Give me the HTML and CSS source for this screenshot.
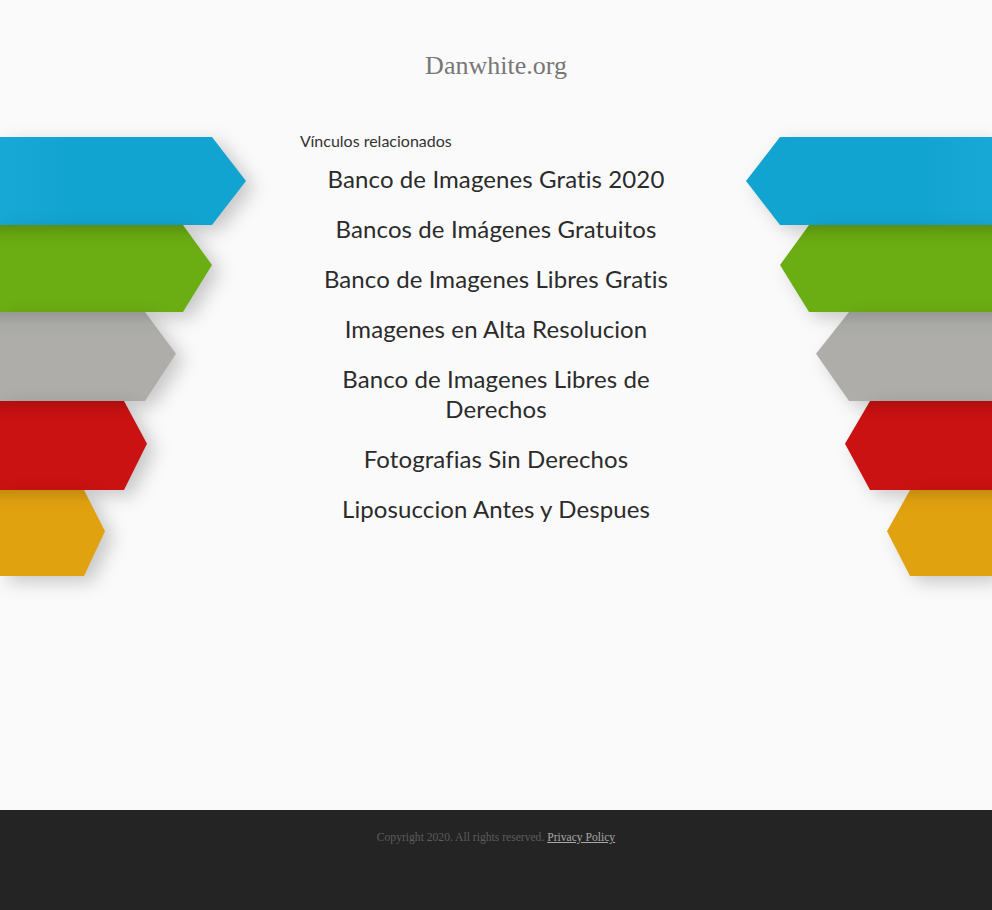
FILE: index.html
```html
<!DOCTYPE html>
<html lang="es">
<head>
<meta charset="utf-8">
<title>Danwhite.org</title>
<link rel="stylesheet" href="styles.css">
</head>
<body>
<div class="page">
  <header class="header">
    <h1 class="site-title">Danwhite.org</h1>
  </header>
  <main class="main">
    <div class="side side-left">
      <div class="arrow arrow-blue a1"></div>
      <div class="arrow arrow-green a2"></div>
      <div class="arrow arrow-gray a3"></div>
      <div class="arrow arrow-red a4"></div>
      <div class="arrow arrow-yellow a5"></div>
    </div>
    <section class="center">
      <h2 class="related-title">Vínculos relacionados</h2>
      <ul class="links">
        <li><a href="#">Banco de Imagenes Gratis 2020</a></li>
        <li><a href="#">Bancos de Imágenes Gratuitos</a></li>
        <li><a href="#">Banco de Imagenes Libres Gratis</a></li>
        <li><a href="#">Imagenes en Alta Resolucion</a></li>
        <li><a href="#">Banco de Imagenes Libres de Derechos</a></li>
        <li><a href="#">Fotografias Sin Derechos</a></li>
        <li><a href="#">Liposuccion Antes y Despues</a></li>
      </ul>
    </section>
    <div class="side side-right">
      <div class="arrow arrow-blue a1"></div>
      <div class="arrow arrow-green a2"></div>
      <div class="arrow arrow-gray a3"></div>
      <div class="arrow arrow-red a4"></div>
      <div class="arrow arrow-yellow a5"></div>
    </div>
  </main>
</div>
<footer class="footer">
  <p class="copyright">Copyright 2020. All rights reserved. <a href="#" class="privacy">Privacy Policy</a></p>
</footer>
</body>
</html>
```
FILE: styles.css
```css
html, body {
  margin: 0;
  padding: 0;
}
body {
  background: #fafafa;
  font-family: "Lato", "DejaVu Sans", sans-serif;
  font-variant-ligatures: none;
  color: #2b2b2b;
}
.page {
  height: 810px;
  overflow: hidden;
}
.header {
  padding-top: 49px;
  height: 83px;
  box-sizing: border-box;
}
.site-title {
  margin: 0;
  text-align: center;
  font-family: "Liberation Serif", serif;
  font-weight: normal;
  font-size: 26px;
  line-height: 34px;
  color: #777777;
}
.main {
  display: grid;
  grid-template-columns: 1fr 392px 1fr;
  margin-top: 48px;
}
.side {
  display: flex;
  flex-direction: column;
  padding-top: 6px;
}
.side-left { align-items: flex-start; }
.side-right { align-items: flex-end; }

.arrow {
  filter: drop-shadow(8px 6px 9px rgba(0, 0, 0, 0.2));
}
.arrow::before {
  content: "";
  display: block;
  width: 100%;
  height: 100%;
}
.a1 { width: 246px; height: 88px; }
.a2 { width: 212px; height: 87px; }
.a3 { width: 176px; height: 89px; }
.a4 { width: 147px; height: 89px; }
.a5 { width: 105px; height: 86px; }

.side-left .a1::before { clip-path: polygon(0 0, 212px 0, 100% 50%, 212px 100%, 0 100%); }
.side-left .a2::before { clip-path: polygon(0 0, 183px 0, 100% 46%, 183px 100%, 0 100%); }
.side-left .a3::before { clip-path: polygon(0 0, 145px 0, 100% 47%, 145px 100%, 0 100%); }
.side-left .a4::before { clip-path: polygon(0 0, 124px 0, 100% 48%, 124px 100%, 0 100%); }
.side-left .a5::before { clip-path: polygon(0 0, 84px 0, 100% 48%, 84px 100%, 0 100%); }

.side-right .a1::before { clip-path: polygon(34px 0, 100% 0, 100% 100%, 34px 100%, 0 50%); }
.side-right .a2::before { clip-path: polygon(29px 0, 100% 0, 100% 100%, 29px 100%, 0 46%); }
.side-right .a3::before { clip-path: polygon(33px 0, 100% 0, 100% 100%, 33px 100%, 0 47%); }
.side-right .a4::before { clip-path: polygon(25px 0, 100% 0, 100% 100%, 25px 100%, 0 48%); }
.side-right .a5::before { clip-path: polygon(23px 0, 100% 0, 100% 100%, 23px 100%, 0 48%); }

.arrow-blue::before { background: linear-gradient(to right, #18a8d5 0%, #12a4d1 30%, #12a4d1 100%); }
.side-right .arrow-blue::before { background: linear-gradient(to left, #18a8d5 0%, #12a4d1 30%, #12a4d1 100%); }
.arrow-green::before { background: linear-gradient(to bottom, #5b9010 0%, #67a812 14%, #6bae13 30%, #6bae13 100%); }
.arrow-gray::before { background: linear-gradient(to bottom, #979793 0%, #a9a9a5 14%, #aeada9 30%, #aeada9 100%); }
.arrow-red::before { background: linear-gradient(to bottom, #b00e0e 0%, #c61111 14%, #cb1212 30%, #cb1212 100%); }
.arrow-yellow::before { background: linear-gradient(to bottom, #c58c0c 0%, #dc9e0f 14%, #e1a210 30%, #e1a210 100%); }

.related-title {
  margin: 0 0 13px 0;
  font-size: 16px;
  font-weight: normal;
  line-height: 20px;
  color: #333333;
}
.links {
  list-style: none;
  margin: 0;
  padding: 0;
  display: flex;
  flex-direction: column;
  gap: 20px;
  text-align: center;
}
.links li {
  font-size: 24px;
  line-height: 30px;
  letter-spacing: 0.1px;
}
.links a {
  color: #2b2b2b;
  text-decoration: none;
}
.footer {
  height: 100px;
  background: #242424;
  box-sizing: border-box;
  padding-top: 21px;
}
.copyright {
  margin: 0;
  text-align: center;
  font-family: "Liberation Serif", serif;
  font-size: 11.6px;
  line-height: 14px;
  color: #5c5c5c;
}
.privacy {
  color: #a8a8a8;
  text-decoration: underline;
}
```
